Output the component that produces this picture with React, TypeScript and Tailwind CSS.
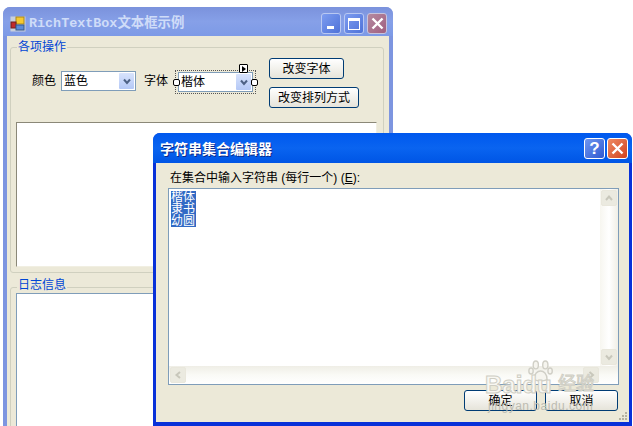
const FONT = "[font-family:'Liberation_Sans','Noto_Sans_CJK_SC',sans-serif]";

function XpButton({ label, w, h = "h-[21px]" }: { label: string; w: string; h?: string }) {
  return (
    <div className={`${w} ${h} flex items-center justify-center rounded-[3px] border border-[#003c74] bg-gradient-to-b from-white to-[#e6e4da] text-[12px] leading-none text-black`}>
      {label}
    </div>
  );
}

function Chevron({ dir, color, size = 10 }: { dir: "up" | "down" | "left" | "right"; color: string; size?: number }) {
  const pts = {
    up: "2,7 5,3.5 8,7",
    down: "2,3.5 5,7 8,3.5",
    left: "7,2 3.5,5 7,8",
    right: "3.5,2 7,5 3.5,8",
  }[dir];
  return (
    <svg width={size} height={size} viewBox="0 0 10 10">
      <polyline points={pts} fill="none" stroke={color} strokeWidth="2" />
    </svg>
  );
}

function Combo({ value, w }: { value: string; w: string }) {
  return (
    <div className={`${w} h-[20px] flex items-center justify-between border border-[#7f9db9] bg-white pl-[2px] pr-[1px] text-[12px] leading-none text-black`}>
      <span>{value}</span>
      <div className="flex h-[16px] w-[15px] items-center justify-center rounded-[1px] bg-gradient-to-b from-[#d8e3fc] to-[#b4c8f6]">
        <Chevron dir="down" color="#4d6185" />
      </div>
    </div>
  );
}

function ScrollBtn({ dir }: { dir: "up" | "down" | "left" | "right" }) {
  return (
    <div className="m-px flex h-[16px] w-[16px] shrink-0 items-center justify-center rounded-[2px] border border-[#e9e7dc] bg-[#ebeae0]">
      <Chevron dir={dir} color="#c8c7bb" />
    </div>
  );
}

function GroupLabel({ text, top }: { text: string; top: string }) {
  return (
    <span className={`absolute left-[6px] ${top} bg-[#ece9d8] px-px text-[12px] leading-[16px] text-[#0046d5]`}>
      {text}
    </span>
  );
}

function Handle({ pos }: { pos: string }) {
  return <div className={`absolute top-[7px] h-[7px] w-[7px] rounded-[2px] border border-black bg-white ${pos}`} />;
}

function MainWindow() {
  return (
    <div className="absolute left-[3px] top-[7px] flex h-[440px] w-[390px] flex-col rounded-t-[7px] bg-[#7d95e0]">
      <div className="flex h-[29px] shrink-0 items-center rounded-t-[7px] bg-gradient-to-b from-[#7b92dc] via-[#86a0e8] to-[#7d9ae6] pl-[7px] pr-[6px] pt-[4px]">
        <svg width="16" height="16" viewBox="0 0 16 16" className="shrink-0">
          <rect x="0.5" y="0.5" width="15" height="15" fill="#c9d0dc" />
          <rect x="6" y="1" width="8" height="7" fill="#f6c92f" stroke="#a8861e" />
          <rect x="1" y="6" width="5" height="6" fill="#c22a2a" stroke="#6d2020" />
          <rect x="6" y="9" width="8" height="5" fill="#5a8ad8" stroke="#33598f" />
        </svg>
        <span className="ml-[3px] flex-1 font-['Liberation_Mono','Noto_Sans_CJK_SC',monospace] text-[13.4px] font-bold leading-none text-[#cfdcf8]">
          RichTextBox文本框示例
        </span>
        <div className="flex gap-[3px]">
          <div className="flex h-[21px] w-[20px] items-end rounded-[3px] border border-[#b9c8f2] bg-gradient-to-br from-[#7d9cf0] to-[#4f72d8] pb-[4px] pl-[5px]">
            <div className="h-[3px] w-[7px] bg-white" />
          </div>
          <div className="flex h-[21px] w-[20px] items-center justify-center rounded-[3px] border border-[#b9c8f2] bg-gradient-to-br from-[#7d9cf0] to-[#4f72d8]">
            <div className="h-[12px] w-[12px] border border-t-[3px] border-white" />
          </div>
          <div className="flex h-[21px] w-[20px] items-center justify-center rounded-[3px] border border-[#c8c4dc] bg-gradient-to-br from-[#b48aa0] to-[#a05f80]">
            <svg width="13" height="13" viewBox="0 0 13 13">
              <path d="M1.5 1.5 L11.5 11.5 M11.5 1.5 L1.5 11.5" stroke="white" strokeWidth="2.4" />
            </svg>
          </div>
        </div>
      </div>

      <div className="mx-[4px] flex-1 bg-[#ece9d8] pl-[3px] pr-[5px] pt-[11px]">
        <div className="relative h-[226px] rounded-[3px] border border-[#d0d0bf] pt-[10px]">
          <GroupLabel text="各项操作" top="top-[-9px]" />
          <div className="flex items-start pl-[21px] text-[12px] leading-[20px] text-black">
            <div className="mt-[13px] flex items-start">
              <span className="w-[29px]">颜色</span>
              <Combo value="蓝色" w="w-[75px]" />
              <span className="ml-[8px] w-[33px]">字体</span>
              <div className="relative ml-px mt-px">
                <Combo value="楷体" w="w-[75px]" />
                <div className="absolute inset-x-[-3px] inset-y-[-2px] border border-dotted border-[#555]" />
                <Handle pos="left-[-5px]" />
                <Handle pos="right-[-5px]" />
                <div className="absolute right-[5px] top-[-8px] flex h-[9px] w-[9px] items-center justify-center rounded-[1px] border border-black bg-white">
                  <div className="h-0 w-0 border-y-[3px] border-l-[4px] border-y-transparent border-l-black" />
                </div>
              </div>
            </div>
            <div className="ml-[16px] flex flex-col gap-[8px]">
              <XpButton label="改变字体" w="w-[75px]" />
              <XpButton label="改变排列方式" w="w-[90px]" />
            </div>
          </div>
          <div className="mx-[5px] mt-[14px] h-[145px] w-[361px] border border-[#8b8878] border-b-[#f1efe2] border-r-[#f1efe2] bg-white" />
        </div>

        <div className="relative mt-[14px] h-[200px] rounded-[3px] border border-[#d0d0bf] px-[5px] pt-[5px]">
          <GroupLabel text="日志信息" top="top-[-11px]" />
          <div className="h-[200px] w-[361px] border border-[#7f9db9] bg-white" />
        </div>
      </div>
    </div>
  );
}

function Watermark() {
  return (
    <div className="pointer-events-none absolute left-[332px] top-[225px] h-[60px] w-[120px]">
      <svg width="26" height="26" viewBox="0 0 30 26" className="absolute left-[43px] top-0">
        <g fill="#f6f5ef" stroke="#d0cfc6" strokeWidth="1.6">
          <ellipse cx="9" cy="6" rx="3" ry="4.5" />
          <ellipse cx="20" cy="6" rx="3" ry="4.5" />
          <ellipse cx="3.5" cy="13" rx="2.5" ry="3.5" />
          <ellipse cx="25.5" cy="13" rx="2.5" ry="3.5" />
          <path d="M7 23 C7 16 11 13 14.5 13 C18 13 22 16 22 23 C18 25 11 25 7 23 Z" />
        </g>
      </svg>
      <span className="absolute left-0 top-[15px] font-['Liberation_Sans',sans-serif] text-[24px] font-bold leading-none text-[#f8f7f2] [-webkit-text-stroke:1px_#cfcec4]">
        Baidu
      </span>
      <span className="absolute left-[73px] top-[17px] text-[18px] leading-none text-[#f8f7f2] [-webkit-text-stroke:1px_#cfcec4]">经验</span>
      <span className="absolute left-[3px] top-[42px] text-[12px] leading-none tracking-[0.5px] text-[#bdbcb2]">
        jingyan.baidu.com
      </span>
    </div>
  );
}

function Dialog() {
  return (
    <div className="absolute left-[153px] top-[133px] flex h-[293px] w-[479px] flex-col rounded-t-[7px] bg-[#0831d9]">
      <div className="flex h-[30px] shrink-0 items-center rounded-t-[7px] bg-gradient-to-b from-[#0058ee] via-[#0a64f0] to-[#0055e5] pl-[7px] pr-[4px] pt-px">
        <span className="flex-1 text-[14px] font-bold leading-none text-white [text-shadow:1px_1px_0_#0a2a8a]">
          字符串集合编辑器
        </span>
        <div className="flex gap-[2px]">
          <div className="flex h-[21px] w-[21px] items-center justify-center rounded-[3px] border border-white bg-gradient-to-br from-[#6f96f0] to-[#2f58d0] font-['Liberation_Sans',sans-serif] text-[17px] font-bold leading-none text-white">
            ?
          </div>
          <div className="flex h-[21px] w-[21px] items-center justify-center rounded-[3px] border border-white bg-gradient-to-br from-[#ee8a62] to-[#d0401c]">
            <svg width="13" height="13" viewBox="0 0 13 13">
              <path d="M1.5 1.5 L11.5 11.5 M11.5 1.5 L1.5 11.5" stroke="white" strokeWidth="2.4" />
            </svg>
          </div>
        </div>
      </div>

      <div className="relative mx-[3px] mb-[4px] flex flex-1 flex-col bg-[#ece9d8] pl-[12px] pr-[11px]">
        <div className="mt-[7px] h-[18px] pl-[2px] text-[12px] leading-[17px] text-black">
          在集合中输入字符串 (每行一个) (<span className="underline">E</span>):
        </div>
        <div className="flex h-[197px] w-[451px] flex-col border border-[#7f9db9] bg-white">
          <div className="flex min-h-0 flex-1">
            <div className="flex-1 pl-[2px] pt-[2px]">
              <div className="w-[25px] bg-[#316ac5] text-[12px] leading-[12px] text-white">
                <div>楷体</div>
                <div>隶书</div>
                <div>幼圆</div>
              </div>
            </div>
            <div className="flex w-[18px] flex-col justify-between bg-gradient-to-r from-[#f7f6f0] via-white to-[#f1efe6]">
              <ScrollBtn dir="up" />
              <ScrollBtn dir="down" />
            </div>
          </div>
          <div className="flex h-[18px] justify-between bg-gradient-to-b from-[#efeee6] via-[#fafaf6] to-white pr-[18px]">
            <ScrollBtn dir="left" />
            <ScrollBtn dir="right" />
          </div>
        </div>
        <div className="mt-[5px] flex justify-end gap-[8px]">
          <XpButton label="确定" w="w-[73px]" />
          <XpButton label="取消" w="w-[73px]" />
        </div>
        <div className="absolute bottom-[2px] right-[2px] grid grid-cols-3 gap-px">
          <span className="h-[2px] w-[2px]" />
          <span className="h-[2px] w-[2px]" />
          <span className="h-[2px] w-[2px] bg-[#b5b2a0]" />
          <span className="h-[2px] w-[2px]" />
          <span className="h-[2px] w-[2px] bg-[#b5b2a0]" />
          <span className="h-[2px] w-[2px] bg-[#b5b2a0]" />
          <span className="h-[2px] w-[2px] bg-[#b5b2a0]" />
          <span className="h-[2px] w-[2px] bg-[#b5b2a0]" />
          <span className="h-[2px] w-[2px] bg-[#b5b2a0]" />
        </div>
      </div>
      <Watermark />
    </div>
  );
}

export default function App() {
  return (
    <div className={`relative h-[426px] w-[633px] overflow-hidden bg-white ${FONT}`}>
      <MainWindow />
      <Dialog />
    </div>
  );
}
